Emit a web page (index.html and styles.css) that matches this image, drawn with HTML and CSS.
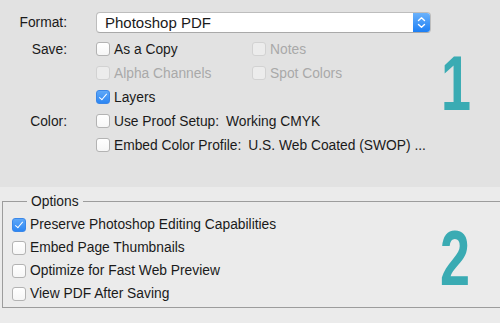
FILE: index.html
```html
<!DOCTYPE html>
<html lang="en">
<head>
    <meta charset="UTF-8">
    <meta name="viewport" content="width=device-width, initial-scale=1.0">
    <title>Save As PDF</title>
    <link rel="stylesheet" href="styles.css">
</head>
<body>
    <div class="save-panel">
        <div class="form-row format-row">
            <div class="label">Format:</div>
            <div class="select">
                <span class="select-value">Photoshop PDF</span>
                <span class="select-arrows">
                    <svg width="9" height="13" viewBox="0 0 9 13">
                        <path d="M1.5 4.5 L4.5 1.8 L7.5 4.5 M1.5 8.5 L4.5 11.2 L7.5 8.5" fill="none" stroke="#fff" stroke-width="1.4" stroke-linecap="round" stroke-linejoin="round"/>
                    </svg>
                </span>
            </div>
        </div>

        <div class="form-row">
            <div class="label">Save:</div>
            <div class="check-grid">
                <label class="check"><span class="box"></span>As a Copy</label>
                <label class="check disabled"><span class="box"></span>Notes</label>
                <label class="check disabled"><span class="box"></span>Alpha Channels</label>
                <label class="check disabled"><span class="box"></span>Spot Colors</label>
                <label class="check"><span class="box checked"></span>Layers</label>
            </div>
        </div>

        <div class="form-row">
            <div class="label">Color:</div>
            <div class="check-list">
                <label class="check"><span class="box"></span>Use Proof Setup:<span class="value">Working CMYK</span></label>
                <label class="check"><span class="box"></span>Embed Color Profile:<span class="value">U.S. Web Coated (SWOP) ...</span></label>
            </div>
        </div>

        <div class="step step-one">1</div>
    </div>

    <div class="options-panel">
        <fieldset class="options">
            <legend>Options</legend>
            <label class="check"><span class="box checked"></span>Preserve Photoshop Editing Capabilities</label>
            <label class="check"><span class="box"></span>Embed Page Thumbnails</label>
            <label class="check"><span class="box"></span>Optimize for Fast Web Preview</label>
            <label class="check"><span class="box"></span>View PDF After Saving</label>
        </fieldset>

        <div class="step step-two">2</div>
    </div>
</body>
</html>
```

FILE: styles.css
```css
body {
    margin: 0;
    font-family: "Liberation Sans", Arial, sans-serif;
    font-size: 13.8px;
    color: #1a1a1a;
    background-color: #ebebeb;
    overflow: hidden;
}
.save-panel {
    position: relative;
    height: 187px;
    box-sizing: border-box;
    padding-top: 12px;
    background-color: #e2e2e2;
}
.form-row {
    display: grid;
    grid-template-columns: 67px auto;
    column-gap: 29px;
}
.format-row {
    align-items: center;
    margin-bottom: 4px;
}
.label {
    text-align: right;
    line-height: 25px;
}
.format-row .label {
    line-height: 21px;
}
.select {
    display: flex;
    width: 335px;
    height: 21px;
    box-sizing: border-box;
    background-color: #fff;
    border: 1px solid #bdbdbd;
    border-bottom-color: #a9a9a9;
    border-radius: 4px;
    overflow: hidden;
}
.select-value {
    flex: 1;
    padding-left: 8px;
    line-height: 20px;
    font-size: 15px;
}
.select-arrows {
    display: flex;
    align-items: center;
    justify-content: center;
    width: 17px;
    background: linear-gradient(#6bb2fb, #1c7ff5);
}
.check-grid {
    display: grid;
    grid-template-columns: 156px auto;
}
.check-list {
    display: flex;
    flex-direction: column;
}
.check {
    display: flex;
    align-items: center;
    height: 24px;
    white-space: nowrap;
}
.check.disabled {
    color: #a9a9a9;
}
.box {
    width: 14px;
    height: 14px;
    box-sizing: border-box;
    margin-right: 4px;
    background: linear-gradient(#ffffff, #f6f6f6);
    border: 1px solid #b3b3b3;
    border-radius: 3px;
    flex-shrink: 0;
}
.disabled .box {
    background: #ececec;
    border-color: #d2d2d2;
}
.box.checked {
    position: relative;
    background: linear-gradient(#5ea8f8, #2c86f3);
    border-color: #3a87e8;
}
.box.checked::after {
    content: "";
    position: absolute;
    left: 4px;
    top: 1px;
    width: 3px;
    height: 7px;
    border: solid #fff;
    border-width: 0 1.6px 1.6px 0;
    transform: rotate(40deg);
}
.value {
    margin-left: 7px;
}
.options-panel {
    position: relative;
    padding-top: 7px;
}
.options {
    margin: 0 -20px 0 2px;
    padding: 4px 0 2px 10px;
    border: 1px solid #9c9c9c;
}
.options legend {
    margin-left: 14px;
    padding: 0 4px;
}
.options .check {
    height: 23px;
    margin-left: -1px;
}
.step {
    position: absolute;
    font-family: "Liberation Sans", sans-serif;
    font-weight: bold;
    font-size: 77px;
    line-height: 1;
    color: #3aabb3;
    transform: scaleX(0.7);
    transform-origin: left top;
}
.step-one {
    top: 45px;
    left: 441px;
}
.step-two {
    top: 33px;
    left: 440px;
}
```
